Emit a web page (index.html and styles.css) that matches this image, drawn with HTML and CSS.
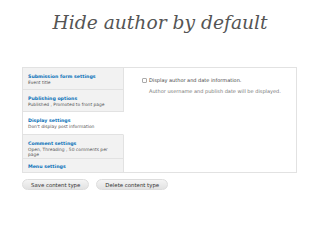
FILE: index.html
```html
<!DOCTYPE html>
<html lang="en">
<head>
  <meta charset="UTF-8" />
  <title>Hide author by default</title>
  <link rel="stylesheet" href="styles.css">
</head>
<body>
  <h1 class="title">Hide author by default</h1>

  <div class="vtabs">
    <ul class="tab-list">
      <li class="tab">
        <a href="#">Submission form settings</a>
        <span class="summary">Event title</span>
      </li>
      <li class="tab">
        <a href="#">Publishing options</a>
        <span class="summary">Published , Promoted to front page</span>
      </li>
      <li class="tab selected">
        <a href="#">Display settings</a>
        <span class="summary">Don't display post information</span>
      </li>
      <li class="tab">
        <a href="#">Comment settings</a>
        <span class="summary">Open, Threading , 50 comments per page</span>
      </li>
      <li class="tab last">
        <a href="#">Menu settings</a>
      </li>
    </ul>

    <div class="pane">
      <label class="option">
        <input type="checkbox" />
        Display author and date information.
      </label>
      <p class="description">Author username and publish date will be displayed.</p>
    </div>
  </div>

  <div class="actions">
    <button class="button">Save content type</button>
    <button class="button">Delete content type</button>
  </div>
</body>
</html>
```

FILE: styles.css
```css
:root {
  --link: #0a71b8;
  --tab-bg: #f2f2f2;
  --border: #e2e2e2;
  --muted: #777;
}

* {
  box-sizing: border-box;
  margin: 0;
  padding: 0;
}

body {
  background: #fff;
  font-family: 'DejaVu Sans', sans-serif;
  width: 320px;
  height: 240px;
  overflow: hidden;
}

.title {
  font-family: 'DejaVu Serif', serif;
  font-style: italic;
  font-weight: normal;
  font-size: 18.7px;
  line-height: 24px;
  color: #555;
  text-align: center;
  padding-top: 11px;
  height: 67px;
}

.vtabs {
  display: flex;
  margin-left: 22px;
  width: 275px;
  height: 106px;
  border: 1px solid var(--border);
}

.tab-list {
  list-style: none;
  width: 101px;
  flex-shrink: 0;
  display: flex;
  flex-direction: column;
}

.tab {
  background: var(--tab-bg);
  border-bottom: 1px solid var(--border);
  border-right: 1px solid var(--border);
  padding: 5px 4px 0 5px;
  height: 22px;
  line-height: 7px;
}

.tab.selected {
  background: #fff;
  border-right-color: transparent;
  height: 23px;
}

.tab:nth-child(4) {
  height: 24px;
}

.tab.last {
  flex: 1;
  border-bottom: none;
  padding-top: 4px;
}

.tab a {
  display: block;
  color: var(--link);
  font-weight: bold;
  font-size: 4.7px;
  text-decoration: none;
}

.summary {
  display: block;
  color: #555;
  font-size: 4.4px;
  line-height: 5px;
}

.pane {
  flex: 1;
  padding: 9px 0 0 18px;
  font-size: 5px;
  color: #444;
}

.option {
  display: flex;
  align-items: center;
  gap: 2px;
}

.option input {
  appearance: none;
  width: 5px;
  height: 5px;
  margin: 0;
  border: 1px solid #aaa;
  border-radius: 1px;
  background: #fff;
}

.description {
  color: var(--muted);
  margin: 5px 0 0 7px;
}

.actions {
  display: flex;
  gap: 7px;
  margin: 6px 0 0 22px;
}

.button {
  font-family: 'DejaVu Sans', sans-serif;
  font-size: 5.4px;
  color: #333;
  height: 11px;
  padding: 0 8px;
  border: 1px solid #ddd;
  border-radius: 6px;
  background: linear-gradient(#f4f4f4, #e2e2e2);
}
```
